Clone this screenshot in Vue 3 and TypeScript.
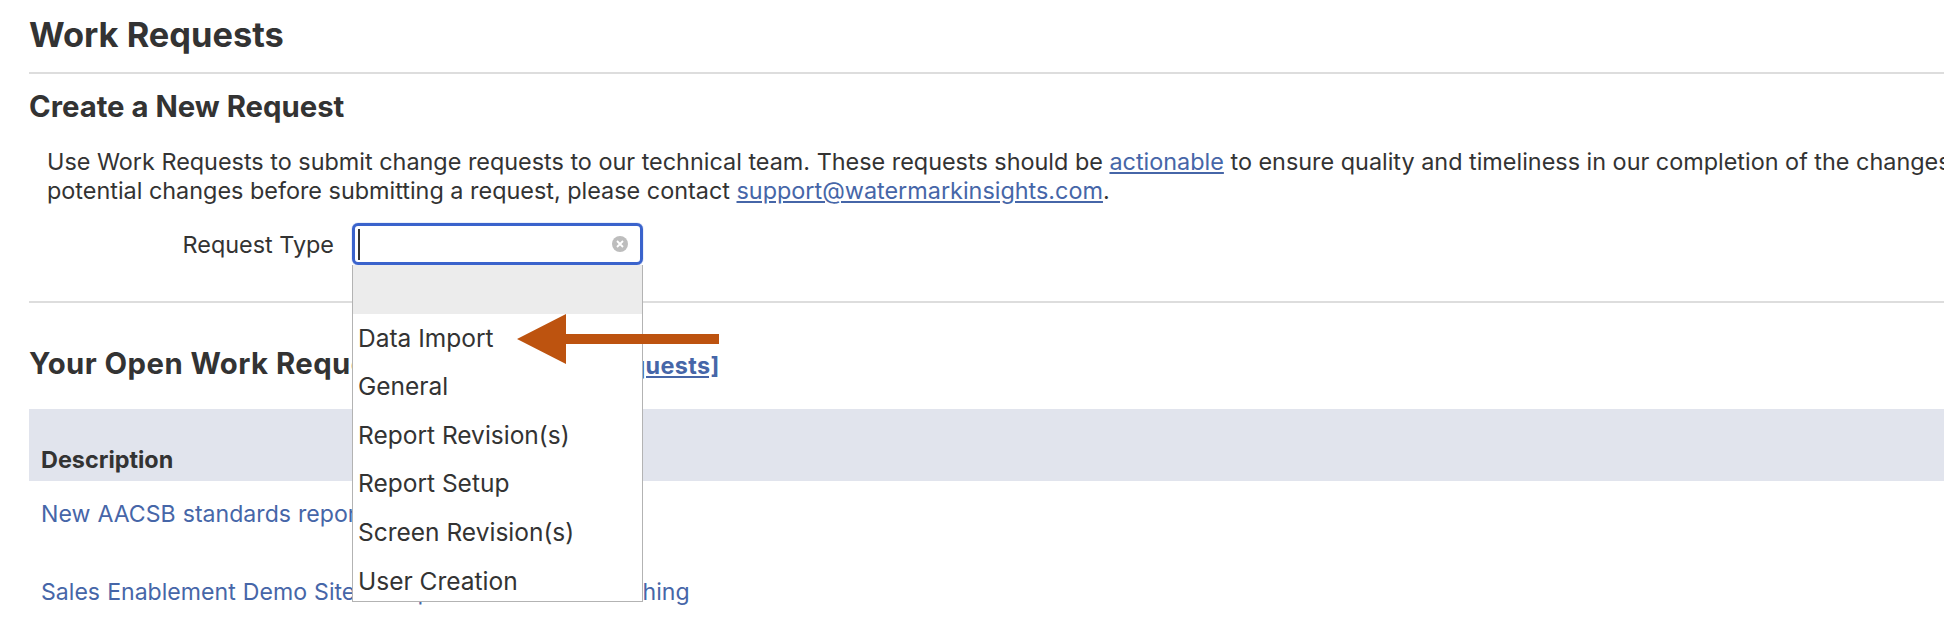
<script setup lang="ts">
const options: string[] = ['Data Import', 'General', 'Report Revision(s)', 'Report Setup', 'Screen Revision(s)', 'User Creation']

const openRequests: string[] = [
  'New AACSB standards report',
  'Sales Enablement Demo Site – Request for Data Refreshing',
]
</script>

<template>
  <div class="page">
    <h1>Work Requests</h1>

    <section class="create">
      <h2>Create a New Request</h2>
      <p class="intro">
        Use Work Requests to submit change requests to our technical team. These requests should be
        <a href="#">actionable</a> to ensure quality and timeliness in our completion of the changes<br />
        potential changes before submitting a request, please contact
        <a href="#">support@watermarkinsights.com</a>.
      </p>

      <div class="type-row">
        <label class="type-label">Request Type</label>
        <div class="combo">
          <div class="combo-input">
            <span class="caret"></span>
            <svg class="clear" viewBox="0 0 16 16" width="16" height="16">
              <circle cx="8" cy="8" r="8" fill="#bdbdbd" />
              <path d="M5 5l6 6M11 5l-6 6" stroke="#fff" stroke-width="1.8" fill="none" />
            </svg>
          </div>
          <ul class="combo-list">
            <li class="blank"></li>
            <li v-for="opt in options" :key="opt">{{ opt }}</li>
          </ul>
          <svg class="arrow" viewBox="0 0 202 50" width="202" height="50">
            <path d="M0 25L49 0V20H202V30H49V50Z" fill="#bd530f" />
          </svg>
        </div>
      </div>
    </section>

    <section class="open">
      <h2>Your Open Work Requests <a href="#" class="all">[View All Work Requests]</a></h2>
      <div class="table-head">Description</div>
      <div v-for="r in openRequests" :key="r" class="table-row">
        <a href="#">{{ r }}</a>
      </div>
    </section>
  </div>
</template>

<style>
html,
body {
  margin: 0;
  background: #fff;
  overflow: hidden;
}
</style>

<style scoped>
.page {
  width: 1944px;
  height: 634px;
  overflow: hidden;
  box-sizing: border-box;
  padding: 16px 0 0 29px;
  font-family: Inter, 'Liberation Sans', sans-serif;
  font-size: 23.4px;
  color: #333;
  white-space: nowrap;
}

h1 {
  margin: 0;
  font-size: 34.4px;
  line-height: 38px;
  font-weight: 700;
  padding-bottom: 18px;
  border-bottom: 2px solid #ddd;
}

h2 {
  margin: 0;
  font-size: 29.3px;
  line-height: 34px;
  font-weight: 700;
}

a {
  color: #4666a8;
  text-decoration: underline;
}

.create {
  padding-top: 16px;
  height: 211px;
  border-bottom: 2px solid #ddd;
}

.intro {
  margin: 23px 0 0 18px;
  line-height: 29px;
}

.type-row {
  display: flex;
  align-items: center;
  margin-top: 18px;
}

.type-label {
  width: 323px;
  padding-right: 18px;
  box-sizing: border-box;
  text-align: right;
}

.combo {
  position: relative;
  width: 291px;
}

.combo-input {
  height: 42px;
  box-sizing: border-box;
  border: 3px solid #3a63cc;
  border-radius: 6px;
  box-shadow: 0 0 1px #3a63cc;
  display: flex;
  align-items: center;
  justify-content: space-between;
  padding: 0 12px 0 3px;
}

.caret {
  width: 2px;
  height: 31px;
  background: #333;
}

.combo-list {
  position: absolute;
  top: 42px;
  left: 0;
  width: 100%;
  height: 337px;
  overflow: hidden;
  margin: 0;
  padding: 0;
  box-sizing: border-box;
  list-style: none;
  background: #fff;
  border: 1px solid #b3b3b3;
  border-top: 0;
  font-size: 24.5px;
  z-index: 2;
}

.combo-list li {
  height: 48.6px;
  line-height: 48.6px;
  padding-left: 5px;
}

.combo-list .blank {
  background: #ececec;
}

.arrow {
  position: absolute;
  top: 91px;
  left: 165px;
  z-index: 3;
}

.open {
  padding-top: 44px;
}

.open h2 {
  letter-spacing: 0.45px;
}

.all {
  font-size: 23.4px;
  letter-spacing: 0.35px;
  margin-left: 1px;
}

.table-head {
  margin-top: 26px;
  height: 72px;
  box-sizing: border-box;
  padding: 36px 0 0 12px;
  background: #e1e4ed;
  font-weight: 700;
  line-height: 30px;
}

.table-row {
  height: 78px;
  padding: 18px 0 0 12px;
  box-sizing: border-box;
  font-size: 23.1px;
  word-spacing: 0.6px;
  line-height: 30px;
}

.table-row a {
  text-decoration: none;
}
</style>
